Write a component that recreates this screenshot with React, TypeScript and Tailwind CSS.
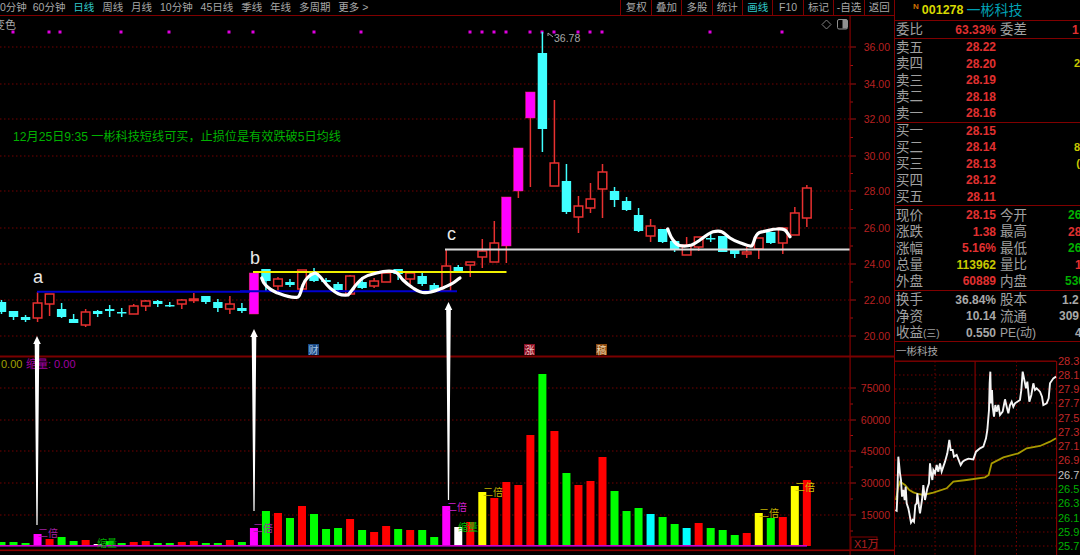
import React from "react";

const X = (i: number) => 1.5 + 12.02 * i;

type C = [number, "c" | "r" | "m", number, number, number, number];
const candles: C[] = [
  [0,"c",300,302,312,314],[1,"c",311,311,317,320],[2,"c",315,317,320,322],[3,"r",292,303,318,322],
  [4,"r",294,294,304,316],[5,"c",303,309,317,318],[6,"c",314,319,323,323],[7,"r",309,312,325,327],
  [8,"c",310,311,314,317],[9,"c",305,309,311,317],[10,"c",308,312,313,317],[11,"r",304,306,314,314],
  [12,"r",300,301,306,311],[13,"c",300,301,304,307],[14,"c",302,305,306,307],[15,"r",299,300,304,309],
  [16,"r",293,299,300,303],[17,"c",296,296,302,304],[18,"c",299,302,308,312],[19,"r",296,304,309,314],
  [20,"c",303,308,311,313],[21,"m",273,273,314,314],[22,"c",269,269,281,291],[23,"r",277,279,286,291],
  [24,"c",279,282,285,287],[25,"r",270,270,289,289],[26,"c",268,273,281,282],[27,"c",278,280,282,285],
  [28,"c",282,284,290,295],[29,"r",275,276,294,295],[30,"c",277,282,288,289],[31,"r",278,281,286,288],
  [32,"r",272,273,282,282],[33,"c",269,269,274,280],[34,"r",272,273,279,284],[35,"c",273,276,284,286],
  [36,"c",283,285,291,291],[37,"r",250,266,291,292],[38,"c",265,267,272,272],[39,"r",262,262,265,277],
  [40,"r",239,251,257,268],[41,"r",221,243,262,262],[42,"m",197,197,246,263],[43,"m",148,148,191,198],
  [44,"m",92,92,118,187],[45,"c",32,53,129,152],[46,"r",100,163,186,186],[47,"c",164,181,212,214],
  [48,"r",196,206,217,233],[49,"r",183,199,208,213],[50,"r",164,172,189,218],[51,"c",187,191,200,207],
  [52,"c",197,201,210,211],[53,"c",208,215,231,232],[54,"r",219,226,236,242],[55,"c",229,229,242,243],
  [56,"c",241,241,249,252],[57,"r",237,245,255,255],[58,"r",237,237,247,251],[59,"c",234,238,239,242],
  [60,"c",236,236,252,252],[61,"c",249,249,254,258],[62,"r",247,252,254,258],[63,"r",238,238,249,259],
  [64,"c",232,232,243,244],[65,"r",228,228,243,254],[66,"r",207,213,235,235],[67,"r",185,188,218,227],
];

const G = "#00ff00", R = "#ff0000", M = "#ff00ff", Y = "#ffff00", Cy = "#00ffff", W = "#ffffff";
const vols: [number, string][] = [
  [542,G],[542,G],[543,G],[534,M],[539,R],[537,G],[541,G],[540,R],[544,W],[541,G],
  [543,G],[542,R],[541,R],[543,G],[543,G],[542,R],[541,R],[543,G],[543,G],[540,R],
  [542,G],[528,M],[511,G],[513,R],[518,G],[506,R],[514,G],[529,G],[528,G],[519,R],
  [530,G],[532,R],[526,R],[529,G],[530,R],[530,G],[537,G],[506,M],[527,W],[522,R],
  [492,Y],[498,R],[482,R],[485,R],[435,R],[374,G],[431,R],[473,G],[485,R],[481,R],
  [457,R],[491,G],[511,G],[508,G],[514,Cy],[517,G],[524,G],[528,Cy],[523,R],[528,G],
  [530,G],[535,G],[533,R],[513,Y],[518,G],[517,R],[486,Y],[480,R],
];

const dots = [13,49,60,121,169,229,253,314,361,470,482,494,506,530,542,554,578,590,602,710,782];

const upperAxis: [string, number][] = [["36.00",47],["34.00",84],["32.00",119],["30.00",156],["28.00",191],["26.00",228],["24.00",264],["22.00",300],["20.00",336]];
const lowerAxis: [string, number][] = [["75000",388],["60000",420],["45000",451],["30000",483],["15000",515]];

const curveA = "M261.7 278 C263 283 268 289 276.7 292.7 C283 295 292 299 298 297 C301 295 301 289 303 285 C305 280 308 275 315 273 C320 274 323 282 330 288 C335 292 339 296 348 295 C352 291 356 283 363 278 C368 275 372 274 376.7 273 C384 271 391 271 395 271.7 C399 273 400 277 403 280 C407 284 410 286 413 288 C418 291 421 293 425 292.7 C431 293 437 290 443 288 C447 286 450 285 453 283 C456 281 458 279 460 278";
const curveB = "M667.7 229 C669 232 670 236 673 240 C675 243 677 245 680 245.7 C685 246.5 688 246 691.7 245 C695 243.5 697 242 700 240 C704 237 709 233 713 231.7 C716 231 719 230.5 721.7 231.7 C725 233 727 236 730 238 C733 240 736 241.5 740 242.7 C744 244 748 246.5 751.7 246 C754 244 754 238 756.7 235 C758 233 760 232 763 231.7 C768 231 772 229 776.7 229 C780 228.5 783 229 785 230 C787 232 788 234 790 236.7";

const tabs = ["0分钟", "60分钟", "日线", "周线", "月线", "10分钟", "45日线", "季线", "年线", "多周期", "更多"];
const tools = ["复权", "叠加", "多股", "统计", "画线", "F10", "标记", "-自选", "返回"];

const pts = (a: number[][]) => a.map(([x, y]) => `${x / 3 + 890},${y / 3 + 340}`).join(" ");
const priceLine = pts([[16,510],[20,512],[22,470],[25,350],[28,380],[30,400],[33,420],[36,470],[40,450],[44,480],[47,440],[50,490],[55,505],[58,520],[63,548],[68,540],[72,545],[76,495],[80,490],[82,460],[87,500],[90,520],[96,480],[100,435],[105,480],[112,445],[117,430],[120,370],[124,405],[127,420],[130,390],[135,400],[140,375],[145,395],[150,370],[155,395],[165,365],[172,340],[178,300],[182,330],[188,330],[192,350],[200,345],[212,375],[218,365],[225,360],[235,356],[250,358],[258,335],[270,325],[280,320],[288,295],[292,270],[297,210],[299,130],[301,95],[303,190],[306,150],[308,200],[312,230],[316,195],[320,215],[325,195],[330,225],[338,215],[345,178],[350,200],[355,220],[360,195],[365,185],[370,200],[375,190],[382,185],[390,180],[394,150],[398,95],[404,125],[408,145],[412,125],[418,185],[424,165],[430,130],[435,150],[440,145],[450,155],[456,170],[460,195],[470,190],[476,175],[480,130],[490,115],[498,110]]);
const avgLine = pts([[18,480],[24,445],[30,425],[45,435],[58,450],[70,457],[85,462],[100,465],[130,458],[170,445],[190,425],[230,420],[285,412],[296,405],[305,370],[340,352],[385,340],[410,325],[450,318],[480,305],[498,295]]);

const miniLabels: [string, number, string][] = [
  ["28.3",361,"#c02828"],["28.1",375,"#c02828"],["27.9",389,"#c02828"],["27.7",403,"#c02828"],["27.5",418,"#c02828"],["27.3",432,"#c02828"],["27.1",446,"#c02828"],["26.9",460,"#c02828"],
  ["26.7",475,"#c0c0c0"],["26.5",489,"#00b000"],["26.3",503,"#00b000"],["26.1",518,"#00b000"],["25.9",532,"#00b000"],["25.7",546,"#00b000"],
];

const line = "#800000";

function Chart() {
  return (
    <svg viewBox="0 16 894 539" className="block h-[539px] w-[894px]">
      {[...upperAxis, ...lowerAxis].map(([t, y]) => (
        <g key={t}>
          <line x1={0} x2={850} y1={y} y2={y} stroke="#720000" strokeWidth={1} strokeDasharray="1.5 2.5" />
          <line x1={850} x2={856} y1={y} y2={y} stroke="#a01010" />
          <text x={890} y={y + 4} textAnchor="end" fontSize={10.5} fill="#b82020">{t}</text>
        </g>
      ))}
      {[65.5,102,137.5,173.5,209.5,246,282,318,404,435.5,467,499,531].map((y) => (
        <line key={y} x1={850} x2={853} y1={y} y2={y} stroke="#a01010" />
      ))}

      <text x={-6} y={29} fontSize={11} fill="#a8a8a8">变色</text>
      {dots.map((x) => <rect key={x} x={x - 1.5} y={30.5} width={3} height={3} fill="#e000e0" />)}
      <text x={13} y={141} fontSize={12.15} fill="#00b000">12月25日9:35 一彬科技短线可买，止损位是有效跌破5日均线</text>

      <path d="M826.5 20 L831 24.5 L826.5 29 L822 24.5 Z" fill="none" stroke="#808080" strokeWidth={1} />
      <rect x={837.5} y={19.5} width={10} height={9.5} rx={1.5} fill="none" stroke="#909090" />
      <rect x={842.5} y={20} width={4.5} height={8.5} fill="#909090" />

      {candles.map(([i, k, hi, top, bot, lo]) => {
        const x = X(i);
        const col = k === "c" ? "#40ffff" : "#e83030";
        return (
          <g key={i}>
            <line x1={x} x2={x} y1={hi} y2={lo} stroke={col} strokeWidth={1.5} />
            {k === "c" && <rect x={x - 4.7} y={top} width={9.4} height={Math.max(bot - top, 1.5)} fill="#40ffff" />}
            {k === "m" && <rect x={x - 4.7} y={top} width={9.4} height={bot - top} fill="#ff00ff" stroke="#e83060" strokeWidth={0.5} />}
            {k === "r" && <rect x={x - 4.3} y={top} width={8.6} height={Math.max(bot - top, 1.5)} fill="#000" stroke="#e83030" strokeWidth={1.5} />}
          </g>
        );
      })}

      <line x1={37} x2={250} y1={291.7} y2={291.7} stroke="#0000d0" strokeWidth={2} />
      <line x1={240} x2={457} y1={291.2} y2={291.2} stroke="#0000d0" strokeWidth={2} />
      <line x1={253} x2={506.5} y1={272} y2={272} stroke="#f0f000" strokeWidth={2} />
      <line x1={445} x2={850} y1={249.5} y2={249.5} stroke="#dcdcdc" strokeWidth={2.2} />
      <path d={curveA} fill="none" stroke="#fff" strokeWidth={3.2} strokeLinecap="round" />
      <path d={curveB} fill="none" stroke="#fff" strokeWidth={3.2} strokeLinecap="round" />

      <path d="M548 33 L553 37 M548 33 L548 36" stroke="#a0a0a0" fill="none" />
      <text x={554} y={42} fontSize={10.5} fill="#a8a8a8">36.78</text>
      <text x={33} y={282.5} fontSize={18} fill="#e8e8e8">a</text>
      <text x={250} y={264} fontSize={18} fill="#e8e8e8">b</text>
      <text x={447} y={239.5} fontSize={18} fill="#e8e8e8">c</text>

      <rect x={0} y={355.5} width={894} height={2} fill="#7a0000" />
      <rect x={308} y={344} width={11} height={11} fill="#1a4a86" />
      <text x={313.5} y={353.5} textAnchor="middle" fontSize={10} fill="#a8c4e0">财</text>
      <rect x={524} y={344} width={11} height={11} fill="#8a1024" />
      <text x={529.5} y={353.5} textAnchor="middle" fontSize={10} fill="#f0c0c0">涨</text>
      <rect x={596} y={344} width={11} height={11} fill="#8a4a10" />
      <text x={601.5} y={353.5} textAnchor="middle" fontSize={10} fill="#f0d8b0">稿</text>

      <text x={1} y={368} fontSize={11} fill="#a0a000">0.00</text>
      <text x={26} y={368} fontSize={11} fill="#a000a0">缩量: 0.00</text>

      {vols.map(([top, c], i) => (
        <rect key={i} x={X(i) - 4} y={top} width={8} height={546 - top} fill={c} />
      ))}
      <rect x={0} y={545} width={807} height={1.6} fill="#d000d0" />
      <rect x={0} y={549.5} width={894} height={1.6} fill="#8a0000" />

      <text x={38} y={537} fontSize={10} fill="#a020a0">二倍</text>
      <text x={253} y={532} fontSize={10} fill="#a020a0">二倍</text>
      <text x={447} y={511} fontSize={10} fill="#d020d0">二倍</text>
      <text x={483} y={496} fontSize={10} fill="#c0b000">二倍</text>
      <text x={759} y={517} fontSize={10} fill="#c0b000">二倍</text>
      <text x={795} y={491} fontSize={10} fill="#d0c000">二倍</text>
      <text x={97} y={547} fontSize={10} fill="#00b000">缩量</text>
      <text x={458} y={531} fontSize={10} fill="#00c000">缩量</text>

      <polygon points="37,336 40.8,344 39.3,344 37.6,525 36.4,525 34.7,344 33.2,344" fill="#fff" />
      <polygon points="254,329 257.8,337 256.3,337 254.6,511 253.4,511 251.7,337 250.2,337" fill="#fff" />
      <polygon points="448.5,302 452.3,310 450.8,310 449.1,500 447.9,500 446.2,310 444.7,310" fill="#fff" />

      <rect x={849.5} y={16} width={1.2} height={539} fill={line} />
      <rect x={851} y={537} width={26} height={13} fill="none" stroke={line} />
      <text x={854} y={548} fontSize={11} fill="#b02020">X1万</text>
    </svg>
  );
}

function Mini() {
  return (
    <svg viewBox="895 361 185 194" className="block h-[194px] w-[185px] overflow-visible">
      {[375,389,403,418,432,446,460,489,503,518,532,546].map((y) => (
        <line key={y} x1={895} x2={1056} y1={y} y2={y} stroke="#720000" strokeDasharray="1.5 2.5" />
      ))}
      {[935,1016.5].map((x) => (
        <line key={x} x1={x} x2={x} y1={361} y2={555} stroke="#720000" strokeDasharray="1.5 2.5" />
      ))}
      <rect x={895} y={360.5} width={161} height={1.4} fill={line} />
      <rect x={1056} y={361} width={1.2} height={194} fill={line} />
      <rect x={974.5} y={361} width={1.2} height={194} fill={line} />
      <rect x={895} y={474.5} width={161} height={1.2} fill={line} />
      <polyline points={avgLine} fill="none" stroke="#a89a00" strokeWidth={1.8} />
      <polyline points={priceLine} fill="none" stroke="#f4f4f4" strokeWidth={1.9} />
      {miniLabels.map(([t, y, c]) => (
        <text key={t} x={1058} y={y + 4} fontSize={11} fill={c}>{t}</text>
      ))}
    </svg>
  );
}

const red = "text-[#e03030]";
const lbl = "text-[13.5px] leading-none text-[#a0a0a0]";

type QuoteRow = { a: React.ReactNode; v: string; vc: string; b: React.ReactNode; r: string; rc: string; rp: string };

function Row({ a, v, vc, b, r, rc, rp }: QuoteRow) {
  return (
    <div className="flex h-[16.5px] items-center pl-[1px]">
      <span className={`w-[44px] shrink-0 whitespace-nowrap ${lbl}`}>{a}</span>
      <span className={`w-[56px] shrink-0 text-right text-[12px] font-bold leading-none ${vc}`}>{v}</span>
      <span className={`ml-[4px] w-[40px] shrink-0 whitespace-nowrap ${lbl}`}>{b}</span>
      <span className={`flex-1 whitespace-nowrap text-[12px] font-bold leading-none ${rp} ${rc}`}>{r}</span>
    </div>
  );
}

function Book({ rows }: { rows: [string, string, string][] }) {
  return (
    <div className="border-b border-[#800000]">
      {rows.map(([a, v, extra]) => (
        <div key={a} className="flex h-[16.5px] items-center pl-[1px]">
          <span className={`w-[44px] shrink-0 ${lbl}`}>{a}</span>
          <span className={`w-[56px] shrink-0 text-right text-[12px] font-bold leading-none ${red}`}>{v}</span>
          <span className="flex-1 text-right text-[11px] font-bold leading-none text-[#c8c800]">{extra}</span>
        </div>
      ))}
    </div>
  );
}

const gray = "text-[#a8a8a8]";
const green = "text-[#00b000]";
const yellow = "text-[#c8c800]";

export default function App() {
  return (
    <div className="flex h-[555px] w-[1080px] overflow-hidden bg-black font-['Liberation_Sans','Noto_Sans_CJK_SC',sans-serif]">
      <div className="flex h-full w-[895px] shrink-0 flex-col border-r border-[#800000]">
        <div className="flex h-[16px] shrink-0 items-stretch justify-between border-b border-[#800000]">
          <div className="flex items-center gap-[7.9px] text-[10.5px] leading-none text-[#a8a8a8]">
            {tabs.map((t, i) => (
              <span key={t} className={i === 0 ? "mr-[-2px] whitespace-nowrap" : t === "日线" ? "whitespace-nowrap text-[#30c8c8]" : "whitespace-nowrap"}>{t}</span>
            ))}
            <span className="ml-[-5px] text-[#a8a8a8]">&gt;</span>
          </div>
          <div className="flex">
            {tools.map((t) => (
              <span
                key={t}
                className={`flex w-[30.4px] items-center justify-center whitespace-nowrap border-l border-[#800000] text-[10.5px] leading-none ${t === "画线" ? "text-[#30c8c8]" : "text-[#a8a8a8]"}`}
              >
                {t}
              </span>
            ))}
          </div>
        </div>
        <Chart />
      </div>

      <div className="flex h-full w-[185px] shrink-0 flex-col overflow-hidden">
        <div className="flex h-[21px] shrink-0 items-center border-b border-[#800000] pl-[18px]">
          <span className="mb-[6px] text-[8px] font-bold leading-none text-[#d07000]">N</span>
          <span className="ml-[3px] text-[12.5px] font-bold leading-none text-[#d8d800]">001278</span>
          <span className="ml-[3px] text-[14px] leading-none text-[#00a0b4]">一彬科技</span>
        </div>
        <div className="flex h-[18px] shrink-0 items-center border-b border-[#800000] pl-[1px]">
          <span className={`w-[44px] shrink-0 ${lbl}`}>委比</span>
          <span className={`w-[56px] shrink-0 text-right text-[12px] font-bold leading-none ${red}`}>63.33%</span>
          <span className={`ml-[4px] w-[72px] shrink-0 ${lbl}`}>委差</span>
          <span className={`text-[12px] font-bold leading-none ${red}`}>1</span>
        </div>
        <Book rows={[["卖五","28.22",""],["卖四","28.20","2"],["卖三","28.19",""],["卖二","28.18",""],["卖一","28.16",""]]} />
        <Book rows={[["买一","28.15",""],["买二","28.14","8"],["买三","28.13","("],["买四","28.12",""],["买五","28.11",""]]} />
        <div className="border-b border-[#800000] pt-[1px]">
          <Row a="现价" v="28.15" vc={red} b="今开" r="26" rc={green} rp="pl-[28px]" />
          <Row a="涨跌" v="1.38" vc={red} b="最高" r="28" rc={red} rp="pl-[28px]" />
          <Row a="涨幅" v="5.16%" vc={red} b="最低" r="26" rc={green} rp="pl-[28px]" />
          <Row a="总量" v="113962" vc={yellow} b="量比" r="1" rc={red} rp="pl-[35px]" />
          <Row a="外盘" v="60889" vc={red} b="内盘" r="530" rc={green} rp="pl-[25px]" />
        </div>
        <div className="border-b border-[#800000] pt-[1px]">
          <Row a="换手" v="36.84%" vc={gray} b="股本" r="1.2" rc={gray} rp="pl-[22px]" />
          <Row a="净资" v="10.14" vc={gray} b="流通" r="309" rc={gray} rp="pl-[19px]" />
          <Row a={<>收益<span className="text-[10px]">(三)</span></>} v="0.550" vc={gray} b={<span className="text-[12px]">PE(动)</span>} r="4" rc={gray} rp="pl-[35px]" />
        </div>
        <div className="flex h-[19px] shrink-0 items-center pl-[1px] text-[10.5px] leading-none text-[#a8a8a8]">一彬科技</div>
        <Mini />
      </div>
    </div>
  );
}
